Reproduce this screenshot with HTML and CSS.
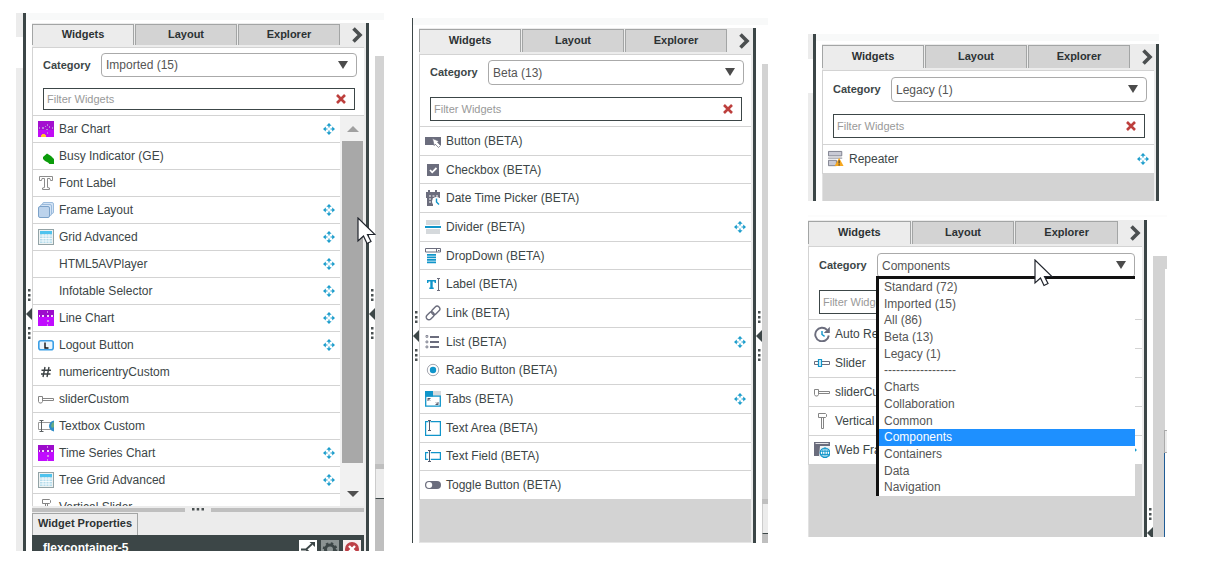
FILE: index.html
```html
<!DOCTYPE html>
<html lang="en">
<head>
<meta charset="utf-8">
<title>Widget panels</title>
<link rel="stylesheet" href="styles.css">
</head>
<body>
<svg class="sprite" aria-hidden="true">
  <symbol id="move" viewBox="0 0 12 12"><g fill="#1a9ccb"><path d="M6 0l2.600 2.800H3.400zM6 12l2.600-2.800H3.400zM0 6l2.800-2.600v5.200zM12 6L9.200 3.400v5.200z"/><path d="M5.400 2h1.200v2.500H5.400zM5.400 7.500h1.200V10H5.400zM2 5.400h2.500v1.200H2zM7.500 5.400H10v1.200H7.500z"/></g></symbol>
  <symbol id="chev" viewBox="0 0 14 16"><path d="M4.500 1.500L11 8l-6.500 6.500" fill="none" stroke="#4b4f50" stroke-width="3.600"/></symbol>
  <symbol id="cross" viewBox="0 0 10 10"><path d="M1 1l8 8M9 1L1 9" stroke="#bd3f3d" stroke-width="2.600"/></symbol>
  <symbol id="dots" viewBox="0 0 3 12"><path d="M0 0h2.500v2.500H0zM0 5h2.500v2.500H0zM0 9.500h2.500V12H0z" fill="#4a5152"/></symbol>
  <symbol id="tri" viewBox="0 0 6 12"><path d="M6 0v12L0 6z" fill="#3c4647"/></symbol>
  <symbol id="pointer" viewBox="0 0 19 28"><path d="M1 1v23l5.500-5 3.500 7.500 4-2-3.500-7h7.500z" fill="#fff" stroke="#20242c" stroke-width="1.200"/></symbol>

  <symbol id="barchart" viewBox="0 0 16 16"><path fill="#a40fd0" d="M0 0h16v9H0z"/><path fill="#c10cf5" d="M0 9h16v7H0z"/><path fill="#b880dc" d="M1 6h1v2H1zM4 6h2v2H4zM7 5h1v1H7zM9 3h1v2H9zM11 5h1v2h-1zM14 6h1v2h-1zM8 8h2v1H8zM9 11h1v2H9z"/><path fill="#ffc531" d="M4 13h3v1h1v2H3v-2h1z"/></symbol>
  <symbol id="linechart" viewBox="0 0 16 16"><path fill="#9d0ccc" d="M0 0h16v7H0z"/><path fill="#c10cff" d="M0 7h16v9H0z"/><path fill="#f2d9fa" d="M1 5h1v2H1zM4 5h2v2H4zM9 5h2v2H9zM13 5h2v2h-2z"/><path fill="#d78be9" d="M9 1h1v2H9zM9 10h2v2H9zM9 14h1v2H9z"/></symbol>
  <symbol id="busy" viewBox="0 0 16 16"><path fill="#0b9c0b" d="M5 9l4-3.500L13 8l3 3v5.500h-4l-2-2-3-1.500-2-2z"/></symbol>
  <symbol id="font" viewBox="0 0 16 16"><path fill="#fff" stroke="#8c8c8c" d="M1.500 1.500h13v4h-2l-.5-2H9.500v9l2 .5v1.500h-7V13l2-.5v-9H4l-.5 2h-2z"/></symbol>
  <symbol id="frame" viewBox="0 0 16 16"><g stroke="#9bbbdc" fill="#d3e3f5"><rect x="4.500" y=".5" width="11" height="11" rx="1.500"/><rect x="2.500" y="2.500" width="11" height="11" rx="1.500"/><rect x=".5" y="4.500" width="11" height="11" rx="1.500" fill="#bcd3ec" stroke="#7ca2c9"/></g></symbol>
  <symbol id="grid" viewBox="0 0 16 16"><rect x=".5" y=".5" width="15" height="15" fill="#eef2f2" stroke="#93a3a6"/><path fill="#4ec3ee" d="M2 2h12v3H2z"/><path fill="#b5dcec" d="M2 5h12v9H2z"/><path d="M2 7h12M2 9.500h12M2 12h12M5 5v9M8 5v9M11 5v9" stroke="#fff" stroke-width=".8"/></symbol>
  <symbol id="logout" viewBox="0 0 16 16"><rect x=".8" y="3.800" width="14.400" height="9" rx="2" fill="#eaf5fd" stroke="#3b9fe6" stroke-width="1.600"/><path d="M7 5.500V11h3.500" fill="none" stroke="#111" stroke-width="1.400"/></symbol>
  <symbol id="hash" viewBox="0 0 16 16"><path d="M7 3L5 13M11 3L9 13M3.500 6.300h9.500M3 10h9.500" fill="none" stroke="#3b4143" stroke-width="1.400"/></symbol>
  <symbol id="slidergrey" viewBox="0 0 16 16"><path d="M4.500 7.500h11v2h-11zM.5 5.500h4v5l-1 1.500h-2l-1-1.500z" fill="#fff" stroke="#858585"/></symbol>
  <symbol id="textbox" viewBox="0 0 16 16"><path d="M.5 4.500h12v7H.5z" fill="#fff" stroke="#999"/><path d="M1.500 2.500h4M1.500 13.500h4M3.500 2.500v11" stroke="#5b6062"/><path d="M16 2.500a6 6 0 0 0-5 5.500 6 6 0 0 0 5 5.500z" fill="#2f8cc7"/><path d="M14 5l2-1v5l-2 1-1-2z" fill="#6aab82"/></symbol>
  <symbol id="vslider" viewBox="0 0 16 16"><path d="M7.500 4.500h2v11h-2zM4.500.5h7l1 1v2l-1 1h-7z" fill="#fff" stroke="#858585"/></symbol>

  <symbol id="button" viewBox="0 0 16 16"><path d="M0 4h16v8H0z" fill="#6b6d7d"/><path d="M7.500 5.500l6.500 2.700-1.500 1 3 3.300-2 2-3.300-3.300-1 1.500z" fill="#fff" stroke="#6b6d7d" stroke-width=".7"/></symbol>
  <symbol id="checkbox" viewBox="0 0 16 16"><path d="M2 2h12v12H2z" fill="#6b6d7d"/><path d="M5 8l2.200 2.300L11.500 6" fill="none" stroke="#fff" stroke-width="1.800"/></symbol>
  <symbol id="date" viewBox="0 0 16 16"><path d="M1 2h2V0h2v2h5V0h2v2h3v6H8v8H2V8H1z" fill="#6b6d7d"/><path d="M4 6h2M7.500 6h2M11 6h2M4 9h2M4 12h2" stroke="#fff" stroke-width="1.200"/><circle cx="11.500" cy="11.500" r="4.500" fill="#fff"/><path d="M11.500 8.500v3.500l2.500 2.500" fill="none" stroke="#1095ca" stroke-width="1.400"/></symbol>
  <symbol id="divider" viewBox="0 0 16 16"><path d="M1 1h14v5H1zM1 10h14v5H1z" fill="#d5d9dc"/><path d="M0 7h16v2H0z" fill="#1095ca"/></symbol>
  <symbol id="dropdown" viewBox="0 0 16 16"><path d="M.5.5h15V4H.5zM11.500.5V4" fill="#fff" stroke="#6b6d7d"/><path d="M13 2h1.500v1H13z" fill="#6b6d7d"/><path d="M2 6.800h9M2 9.300h9M2 11.800h9M2 14.300h9" stroke="#1095ca" stroke-width="1.700"/></symbol>
  <symbol id="label" viewBox="0 0 16 16"><path d="M2 4h9v3H9.700l-.4-1.400H7.700v6h1v1.400H4.300v-1.400h1v-6H3.600L3.300 7H2z" fill="#1095ca"/><path d="M12 2.500h3M12 14.500h3M13.500 2.500v12" stroke="#6b6d7d"/></symbol>
  <symbol id="link" viewBox="0 0 16 16"><g fill="none" stroke="#6b6d7d" stroke-width="1.400" transform="rotate(-45 8 8)"><rect x="-.5" y="5.300" width="9" height="5.400" rx="2.700"/><rect x="7" y="5.300" width="9.500" height="5.400" rx="2.700"/></g></symbol>
  <symbol id="list" viewBox="0 0 16 16"><path d="M5 3h9M5 8h9M5 13h9" stroke="#6b6d7d" stroke-width="1.900"/><g fill="#fff" stroke="#6b6d7d" stroke-width=".8"><path d="M1 1.500h1.800v1.800H1zM1 7h1.800v1.800H1zM1 12h1.800v1.800H1z"/></g></symbol>
  <symbol id="radio" viewBox="0 0 16 16"><circle cx="8" cy="8" r="5.700" fill="#fff" stroke="#a5a7b0"/><circle cx="8" cy="8" r="3.200" fill="#1095ca"/></symbol>
  <symbol id="tabs" viewBox="0 0 16 16"><path d="M8 0h8v5H8z" fill="#d5d9dc"/><path d="M.7 5.200h14.600v10H.7z" fill="#fff" stroke="#1095ca" stroke-width="1.300"/><path d="M0 0h8v5.500H0z" fill="#1095ca"/><path d="M3 10V7.500h2.500M3 7.500l2 2M13 11v2.500h-2.500M13 13.500l-2-2" fill="none" stroke="#55596a"/></symbol>
  <symbol id="textarea" viewBox="0 0 16 16"><path d="M.6 1.600h14.800v13.800H.6z" fill="#fff" stroke="#1095ca" stroke-width="1.200"/><path d="M3.500 0h2v11h-2z" fill="#fff"/><path d="M3 .5h3M3 10.500h3M4.500.5v10" stroke="#55596a"/></symbol>
  <symbol id="textfield" viewBox="0 0 16 16"><path d="M.6 4.600h14.800v6.800H.6z" fill="#fff" stroke="#1095ca" stroke-width="1.200"/><path d="M3.200 3h2.600v10H3.200z" fill="#fff"/><path d="M3 2.500h3M3 13.500h3M4.500 2.500v11" stroke="#55596a"/></symbol>
  <symbol id="toggle" viewBox="0 0 16 16"><rect y="4" width="16" height="8" rx="4" fill="#6b6d7d"/><circle cx="4.200" cy="8" r="3" fill="#fff"/></symbol>
  <symbol id="repeater" viewBox="0 0 18 18"><path d="M.5.5h15v5H.5z" fill="#c9cad5" stroke="#777986"/><path d="M0 8h16" stroke="#777986"/><path d="M.5 10.500h9v6h-9z" fill="#c9cad5" stroke="#777986"/><path d="M12.500 7.500l5 9.500h-10z" fill="#f6a821"/><path d="M12.500 10.500V14M12.500 15v1.300" stroke="#333" stroke-width="1.200"/></symbol>
  <symbol id="refresh" viewBox="0 0 16 16"><path d="M13 3.800A6.800 6.800 0 1 0 14.800 9.500" fill="none" stroke="#6b6d7d" stroke-width="1.900"/><path d="M15.800.8V7H9.800z" fill="#6b6d7d"/><path d="M8 5v3.500l2.600 1.800" fill="none" stroke="#1095ca" stroke-width="1.400"/></symbol>
  <symbol id="slider" viewBox="0 0 16 16"><path d="M.5 6.500h15v3H.5z" fill="#fff" stroke="#6b6d7d"/><path d="M4.500 4.500h3v7h-3z" fill="#d9f1fb" stroke="#1095ca" stroke-width="1.200"/></symbol>
  <symbol id="webframe" viewBox="0 0 16 16"><path d="M0 0h16v14H0z" fill="#6b6d7d"/><path d="M1.500 1.500h13" stroke="#fff" stroke-width=".8"/><path d="M6 4h10v11H5z" fill="#eef1f3"/><circle cx="11" cy="10.800" r="4.800" fill="#fff" stroke="#1095ca" stroke-width="1.200"/><path d="M6.500 9.200h9M6.500 12.400h9M11 6v9.600" stroke="#1095ca"/><ellipse cx="11" cy="10.800" rx="2.400" ry="4.800" fill="none" stroke="#1095ca" stroke-width=".9"/></symbol>
</svg>

<main class="page">
  <section class="shot shot-imported">
    <div class="outer outer-wide"></div>
    <div class="bar"></div>
    <div class="main">
      <div class="strip"></div>
      <div class="body">
        <div class="gutter"><svg class="dots"><use href="#dots"/></svg><svg class="tri"><use href="#tri"/></svg><svg class="dots"><use href="#dots"/></svg></div>
        <div class="panel">
          <nav class="tabs"><button class="tab active">Widgets</button><button class="tab">Layout</button><button class="tab">Explorer</button><button class="next" aria-label="Collapse"><svg><use href="#chev"/></svg></button></nav>
          <form class="filters">
            <div class="category"><label for="c1">Category</label><div class="select"><select id="c1"><option>Imported (15)</option></select></div></div>
            <div class="search"><input type="text" aria-label="Filter" placeholder="Filter Widgets"><button type="button" aria-label="Clear"><svg><use href="#cross"/></svg></button></div>
          </form>
          <div class="scroller">
            <ul class="items">
              <li><svg><use href="#barchart"/></svg><span>Bar Chart</span><svg class="move"><use href="#move"/></svg></li>
              <li><svg><use href="#busy"/></svg><span>Busy Indicator (GE)</span></li>
              <li><svg><use href="#font"/></svg><span>Font Label</span></li>
              <li><svg><use href="#frame"/></svg><span>Frame Layout</span><svg class="move"><use href="#move"/></svg></li>
              <li><svg><use href="#grid"/></svg><span>Grid Advanced</span><svg class="move"><use href="#move"/></svg></li>
              <li><svg></svg><span>HTML5AVPlayer</span><svg class="move"><use href="#move"/></svg></li>
              <li><svg></svg><span>Infotable Selector</span><svg class="move"><use href="#move"/></svg></li>
              <li><svg><use href="#linechart"/></svg><span>Line Chart</span><svg class="move"><use href="#move"/></svg></li>
              <li><svg><use href="#logout"/></svg><span>Logout Button</span><svg class="move"><use href="#move"/></svg></li>
              <li><svg><use href="#hash"/></svg><span>numericentryCustom</span></li>
              <li><svg><use href="#slidergrey"/></svg><span>sliderCustom</span></li>
              <li><svg><use href="#textbox"/></svg><span>Textbox Custom</span></li>
              <li><svg><use href="#linechart"/></svg><span>Time Series Chart</span><svg class="move"><use href="#move"/></svg></li>
              <li><svg><use href="#grid"/></svg><span>Tree Grid Advanced</span><svg class="move"><use href="#move"/></svg></li>
              <li><svg><use href="#vslider"/></svg><span>Vertical Slider</span></li>
            </ul>
            <div class="scrollbar"><span class="up"></span><span class="thumb"></span><span class="down"></span></div>
          </div>
          <div class="splitter"><span class="rail"></span><svg viewBox="0 0 12 3"><path d="M0 0h2.500v2.500H0zM4.700 0h2.500v2.500H4.700zM9.500 0H12v2.500H9.500z" fill="#4a5152"/></svg><span class="rail"></span></div>
          <div class="props"><button class="tab active">Widget Properties</button></div>
          <div class="element"><strong>flexcontainer-5</strong>
            <button aria-label="Bindings"><svg viewBox="0 0 18 18"><path fill="#fff" d="M0 0h18v18H0z"/><path d="M2 9.500h5L13 4M7 9.500l5 4" fill="none" stroke="#3c4647" stroke-width="1.800"/><path d="M10.500 2H16v5z" fill="#3c4647"/></svg></button>
            <button aria-label="Configure"><svg viewBox="0 0 18 18"><path fill="#8b9393" d="M0 0h18v18H0z"/><circle cx="9" cy="9.500" r="4.500" fill="none" stroke="#3c4647" stroke-width="3"/><circle cx="9" cy="9.500" r="6.300" fill="none" stroke="#3c4647" stroke-width="2" stroke-dasharray="2.500 2.450"/></svg></button>
            <button aria-label="Delete"><svg viewBox="0 0 18 18"><path fill="#f8eeee" d="M0 0h18v18H0z"/><circle cx="9" cy="9" r="7" fill="#bd3f46"/><path d="M6 6l6 6M12 6l-6 6" stroke="#fff" stroke-width="2.400"/></svg></button>
          </div>
        </div>
        <div class="bar"></div>
        <div class="gutter"><svg class="dots"><use href="#dots"/></svg><svg class="tri"><use href="#tri"/></svg><svg class="dots"><use href="#dots"/></svg></div>
        <div class="canvas"><span class="area"></span><span class="split"></span><span class="box"></span><span class="foot"></span></div>
      </div>
    </div>
    <svg class="pointer"><use href="#pointer"/></svg>
  </section>

  <section class="shot tall shot-beta">
    <div class="bar thin"></div>
    <div class="main">
      <div class="strip"></div>
      <div class="body">
        <div class="gutter"><svg class="dots"><use href="#dots"/></svg><svg class="tri"><use href="#tri"/></svg><svg class="dots"><use href="#dots"/></svg></div>
        <div class="panel">
          <nav class="tabs"><button class="tab active">Widgets</button><button class="tab">Layout</button><button class="tab">Explorer</button><button class="next" aria-label="Collapse"><svg><use href="#chev"/></svg></button></nav>
          <form class="filters">
            <div class="category"><label for="c2">Category</label><div class="select"><select id="c2"><option>Beta (13)</option></select></div></div>
            <div class="search"><input type="text" aria-label="Filter" placeholder="Filter Widgets"><button type="button" aria-label="Clear"><svg><use href="#cross"/></svg></button></div>
          </form>
          <ul class="items">
            <li><svg><use href="#button"/></svg><span>Button (BETA)</span></li>
            <li><svg><use href="#checkbox"/></svg><span>Checkbox (BETA)</span></li>
            <li><svg><use href="#date"/></svg><span>Date Time Picker (BETA)</span></li>
            <li><svg><use href="#divider"/></svg><span>Divider (BETA)</span><svg class="move"><use href="#move"/></svg></li>
            <li><svg><use href="#dropdown"/></svg><span>DropDown (BETA)</span></li>
            <li><svg><use href="#label"/></svg><span>Label (BETA)</span></li>
            <li><svg><use href="#link"/></svg><span>Link (BETA)</span></li>
            <li><svg><use href="#list"/></svg><span>List (BETA)</span><svg class="move"><use href="#move"/></svg></li>
            <li><svg><use href="#radio"/></svg><span>Radio Button (BETA)</span></li>
            <li><svg><use href="#tabs"/></svg><span>Tabs (BETA)</span><svg class="move"><use href="#move"/></svg></li>
            <li><svg><use href="#textarea"/></svg><span>Text Area (BETA)</span></li>
            <li><svg><use href="#textfield"/></svg><span>Text Field (BETA)</span></li>
            <li><svg><use href="#toggle"/></svg><span>Toggle Button (BETA)</span></li>
          </ul>
          <div class="filler"></div>
        </div>
        <div class="bar"></div>
        <div class="gutter"><svg class="dots"><use href="#dots"/></svg><svg class="tri"><use href="#tri"/></svg><svg class="dots"><use href="#dots"/></svg></div>
        <div class="canvas"><span class="area"></span><span class="split"></span><span class="box"></span><span class="foot"></span></div>
      </div>
    </div>
  </section>

  <div class="column">
    <section class="shot tall shot-legacy">
      <div class="outer"></div>
      <div class="bar"></div>
      <div class="main">
        <div class="strip"></div>
        <div class="body">
          <div class="gutter"></div>
          <div class="panel">
            <nav class="tabs"><button class="tab active">Widgets</button><button class="tab">Layout</button><button class="tab">Explorer</button><button class="next" aria-label="Collapse"><svg><use href="#chev"/></svg></button></nav>
            <form class="filters">
              <div class="category"><label for="c3">Category</label><div class="select"><select id="c3"><option>Legacy (1)</option></select></div></div>
              <div class="search"><input type="text" aria-label="Filter" placeholder="Filter Widgets"><button type="button" aria-label="Clear"><svg><use href="#cross"/></svg></button></div>
            </form>
            <ul class="items">
              <li><svg class="big"><use href="#repeater"/></svg><span>Repeater</span><svg class="move"><use href="#move"/></svg></li>
            </ul>
            <div class="filler"></div>
          </div>
          <div class="bar"></div>
        </div>
      </div>
    </section>

    <section class="shot tall shot-components">
      <div class="main">
        <div class="strip"></div>
        <div class="body">
          <div class="panel">
            <nav class="tabs"><button class="tab active">Widgets</button><button class="tab">Layout</button><button class="tab">Explorer</button><button class="next" aria-label="Collapse"><svg><use href="#chev"/></svg></button></nav>
            <form class="filters">
              <div class="category"><label for="c4">Category</label>
                <div class="select open"><select id="c4"><option>Components</option></select>
                  <ul class="menu" role="listbox" aria-label="Category">
                    <li role="option">Standard (72)</li><li role="option">Imported (15)</li><li role="option">All (86)</li><li role="option">Beta (13)</li><li role="option">Legacy (1)</li><li role="option">------------------</li><li role="option">Charts</li><li role="option">Collaboration</li><li role="option">Common</li><li role="option" aria-selected="true" class="chosen">Components</li><li role="option">Containers</li><li role="option">Data</li><li role="option">Navigation</li>
                  </ul>
                </div>
              </div>
              <div class="search"><input type="text" aria-label="Filter" placeholder="Filter Widgets"></div>
            </form>
            <ul class="items">
              <li><svg><use href="#refresh"/></svg><span>Auto Refresh</span></li>
              <li><svg><use href="#slider"/></svg><span>Slider</span></li>
              <li><svg><use href="#slidergrey"/></svg><span>sliderCustom</span></li>
              <li><svg><use href="#vslider"/></svg><span>Vertical Slider</span></li>
              <li><svg><use href="#webframe"/></svg><span>Web Frame</span><svg class="move"><use href="#move"/></svg></li>
            </ul>
            <div class="filler"></div>
          </div>
          <div class="bar"></div>
          <div class="gutter"><svg class="dots"><use href="#dots"/></svg><svg class="tri"><use href="#tri"/></svg></div>
          <div class="canvas"><span class="sheet"></span><span class="box"></span><span class="blue"></span></div>
        </div>
      </div>
      <svg class="pointer"><use href="#pointer"/></svg>
    </section>
  </div>
</main>
</body>
</html>
```
FILE: styles.css
```css
* { box-sizing: border-box; }

body {
  margin: 0;
  background: #fff;
  color: #3c4647;
  font: 12px/16px "Liberation Sans", Arial, sans-serif;
}

.sprite { position: absolute; width: 0; height: 0; }
svg { display: block; flex: none; }
ul { list-style: none; margin: 0; padding: 0; }
button, input, select { font: inherit; color: inherit; margin: 0; padding: 0; border: 0; background: none; }

.page {
  display: flex;
  align-items: flex-start;
  padding: 13px 50px 17px 16px;
}

/* Window frame round each panel */
.shot { position: relative; display: flex; min-width: 0; }
.shot-imported { flex: 368 1 0; margin-right: 28px; }
.shot-beta { flex: 356 1 0; margin: 5px 40px 0 0; }
.column { flex: 359 1 0; min-width: 0; display: flex; flex-direction: column; gap: 14px; margin-top: 21px; }
.shot-legacy { margin-right: 8px; }

.outer {
  width: 5px;
  background: linear-gradient(#ececec 25px, #fff 25px, #fff 59px, #ececec 59px);
}
.outer-wide { width: 7px; background: linear-gradient(#ececec 24px, #fff 24px, #fff 55px, #ececec 55px); }
.bar { flex: none; width: 3px; background: #3c4647; }
.bar.thin { width: 1px; }
.main { flex: 1; min-width: 0; display: flex; flex-direction: column; gap: 3px; }
.strip { height: 7px; background: #f8f9f9; }
.body { flex: 1; display: flex; }
.gutter { flex: none; width: 6px; display: flex; flex-direction: column; align-items: center; gap: 7px; overflow: hidden; }
.shot-imported .gutter { padding-top: 266px; }
.shot-beta .gutter { padding-top: 283px; }
.shot-components .gutter { padding-top: 288px; height: 317px; }
.dots { width: 3px; height: 12px; }
.tri { width: 6px; height: 12px; }

.panel {
  flex: 1;
  min-width: 0;
  display: flex;
  flex-direction: column;
  border-right: 2px solid #ececec;
  background: #fff;
}

/* Tabs */
.tabs {
  display: flex;
  gap: 1px;
  height: 25px;
  padding: 1px 0 2px;
  background: #ececec;
  border-bottom: 1px solid #d3d3d3;
}
.tab {
  flex: 1;
  padding-bottom: 2px;
  border: 1px solid #a3a5a5;
  border-bottom: 0;
  background: #d3d3d3;
  color: #2c3233;
  font-size: 11px;
  font-weight: bold;
}
.tab.active { background: #ececec; }
.next { width: 23px; display: flex; align-items: center; justify-content: flex-end; padding-right: 1px; }
.next svg { width: 14px; height: 16px; }
.tall .tabs { height: 27px; padding: 1px 0 2px; }

/* Category and filter */
.filters {
  display: flex;
  flex-direction: column;
  gap: 11px;
  padding: 5px 7px 5px 10px;
  border-left: 1px solid #d3d3d3;
  border-bottom: 1px solid #d3d3d3;
}
.category { display: flex; align-items: center; }
.category label { width: 58px; padding-bottom: 1px; font-size: 11px; font-weight: bold; }
.select { position: relative; flex: 1; }
.select::after {
  content: "";
  position: absolute;
  right: 9px;
  top: 8px;
  border: 5px solid transparent;
  border-top: 8px solid #4b4b4b;
  border-bottom: 0;
}
.select select {
  display: block;
  appearance: none;
  width: 100%;
  height: 24px;
  padding: 0 4px;
  border: 1px solid #aaa;
  border-radius: 4px;
  background: #fff;
  color: #555;
}
.search {
  display: flex;
  align-items: center;
  height: 22px;
  margin-right: 2px;
  padding: 0 8px 0 3px;
  border: 1px solid #3c4647;
}
.search input { flex: 1; min-width: 0; font-size: 11px; outline: 0; }
.search input::placeholder { color: #999; opacity: 1; }
.search svg { width: 10px; height: 10px; }
.tall .filters { padding: 5px 7px 5px 10px; gap: 12px; }
.tall .select select { height: 25px; }
.tall .search { height: 24px; }
.shot-legacy .filters { padding-top: 6px; padding-bottom: 6px; }
.shot-components .filters { padding-top: 6px; }

/* Widget list */
.items { flex: 1; min-width: 0; border-left: 1px solid #d3d3d3; }
.items li {
  display: flex;
  align-items: center;
  gap: 5px;
  height: 27px;
  padding: 0 5px;
  border-bottom: 1px solid #d3d3d3;
  background: #fff;
  white-space: nowrap;
}
.items li svg { width: 16px; height: 16px; overflow: visible; }
.items li .big { width: 16px; height: 18px; }
.items li .big use { width: 18px; height: 18px; }
.items li .move { width: 12px; height: 12px; margin-left: auto; }
.tall .items { flex: none; }
.tall .items li { height: 29px; }
.shot-beta .items { display: grid; grid-auto-rows: 1fr; height: 373px; }
.shot-beta .items li { height: auto; }
.filler { flex: 1; min-height: 27px; border-left: 1px solid #e2e2e2; background: #d3d3d3; }
.shot-beta .filler { min-height: 43px; border-bottom: 1px solid #e6e6e6; }
.shot-components .filler { min-height: 72px; }

.scroller { display: flex; height: 390px; overflow: hidden; }
.scrollbar {
  width: 24px;
  display: flex;
  flex-direction: column;
  align-items: center;
  gap: 9px;
  padding: 10px 1px 9px 2px;
  background: #f1f1f1;
}
.up { border: 6px solid transparent; border-top: 0; border-bottom-color: #a0a0a0; }
.thumb { flex: 1; width: 100%; background: #a8a8a8; margin-bottom: 19px; }
.down { border: 6px solid transparent; border-bottom: 0; border-top-color: #505050; }

/* Widget properties */
.splitter { display: flex; align-items: center; justify-content: space-between; height: 7px; background: #ececec; }
.splitter svg { width: 12px; height: 3px; }
.rail { width: 46%; height: 4px; background: #bfbfbf; }
.props { display: flex; height: 22px; background: #ececec; }
.props .tab { flex: none; padding: 0 5px 3px; }
.element {
  display: flex;
  gap: 4px;
  height: 16px;
  padding: 5px 3px 0 11px;
  overflow: hidden;
  background: #3c4647;
  color: #fff;
}
.element strong { flex: 1; }
.element button, .element svg { width: 18px; height: 18px; }

/* Slice of the work area beside a panel */
.canvas { flex: none; width: 9px; display: flex; flex-direction: column; padding-top: 33px; }
.area { flex: 1; background: #d3d3d3; }
.split { height: 5px; background: #bfbfbf; }
.box { height: 30px; background: #ececec; border-left: 1px solid #ccc; border-bottom: 1px solid #3c4647; }
.foot { height: 52px; background: #bfbfbf; }
.shot-beta .canvas { width: 6px; padding-top: 36px; }
.shot-beta .foot { height: 9px; }

.shot-components .strip { height: 2px; background: #fcfcfc; }
.shot-components .canvas {
  width: 14px;
  margin-top: 36px;
  padding: 13px 0 0 11px;
  background: #d3d3d3;
}
.sheet { height: 161px; margin-left: 1px; background: #fff; }
.shot-components .box { border: 1px solid #aaa; border-right: 0; height: 23px; }
.blue { flex: 1; border-left: 1px solid #1f5c96; background: #fff; }

/* Open category menu */
.menu {
  position: absolute;
  z-index: 1;
  top: 23px;
  left: -1px;
  right: 0;
  display: grid;
  grid-auto-rows: 1fr;
  height: 220px;
  border-left: 3px solid #111;
  border-top: 3px solid #111;
  background: #fff;
  color: #555;
  line-height: 16px;
}
.menu li { padding-left: 5px; }
.menu .chosen { background: #1e90ff; color: #fff; }

.pointer { position: absolute; z-index: 2; width: 19px; height: 28px; }
.shot-imported .pointer { left: 341px; top: 204px; }
.shot-components .pointer { left: 226px; top: 44px; }
```
